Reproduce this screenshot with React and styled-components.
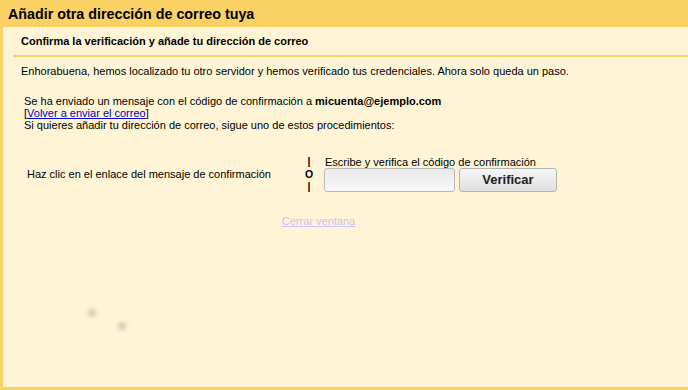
import styled, { createGlobalStyle } from "styled-components";

const GlobalStyle = createGlobalStyle`
  html, body {
    margin: 0;
    padding: 0;
    background: #fff5d6;
  }
  body {
    font-family: "Liberation Sans", Arial, sans-serif;
    color: #000;
  }
`;

const Frame = styled.div`
  position: relative;
  box-sizing: border-box;
  width: 688px;
  height: 390px;
  background: #fff5d6;
  border-left: 3px solid #f9d165;
  border-bottom: 3px solid #f9d165;
  overflow: hidden;
`;

const TitleBar = styled.h1`
  margin: 0 0 0 -3px;
  height: 27px;
  line-height: 28px;
  padding-left: 8px;
  background: #f9d165;
  font-size: 14.3px;
  font-weight: bold;
`;

const Panel = styled.div`
  padding-left: 10px;
`;

const SubHeader = styled.h2`
  margin: 0;
  height: 28px;
  line-height: 28px;
  padding-left: 8px;
  font-size: 11px;
  font-weight: bold;
  border-bottom: 2px solid #f9d165;
`;

const Body = styled.div`
  padding: 8px 0 0 8px;
  font-size: 11px;
  line-height: 12px;
`;

const Intro = styled.p`
  margin: 0;
  line-height: 13px;
`;

const Notice = styled.div`
  margin: 17px 0 0 3px;
`;

const Line = styled.div``;

const ResendLink = styled.a`
  color: #0000cc;
  text-decoration: underline;
`;

const Methods = styled.div`
  display: flex;
  align-items: center;
  margin-top: 24px;
`;

const MethodText = styled.div`
  width: 278px;
  padding-left: 6px;
  box-sizing: border-box;
`;

const Divider = styled.div`
  display: flex;
  flex-direction: column;
  align-items: center;
  width: 20px;
  font-weight: bold;
  font-size: 10.5px;
  line-height: 12.5px;
  color: #000;
`;

const CodeBox = styled.div`
  padding-left: 5px;
`;

const CodeLabel = styled.div`
  font-size: 11px;
  line-height: 12px;
  padding-left: 1px;
`;

const CodeRow = styled.div`
  display: flex;
  gap: 4px;
`;

const CodeInput = styled.input`
  box-sizing: border-box;
  width: 131px;
  height: 24px;
  border: 1px solid #b8b8b8;
  border-radius: 3px;
  background: linear-gradient(#e9e9e9, #f8f8f8);
  padding: 2px 4px;
  font-family: inherit;
`;

const VerifyButton = styled.button`
  box-sizing: border-box;
  width: 98px;
  height: 24px;
  border: 1px solid #b4b4b4;
  border-radius: 3px;
  background: linear-gradient(#f6f6f6, #dedede);
  font-family: "Liberation Sans", Arial, sans-serif;
  font-size: 13px;
  font-weight: bold;
  color: #222;
`;

const Footer = styled.div`
  text-align: center;
  margin: 22px 0 0 -72px;
`;

const CloseLink = styled.a`
  color: #c9c2f2;
  text-decoration: underline;
  font-size: 11px;
`;

const Smudge = styled.span`
  position: absolute;
  left: ${(p) => p.x}px;
  top: ${(p) => p.y}px;
  width: 8px;
  height: 8px;
  border-radius: 50%;
  background: #d2cbb0;
  filter: blur(2px);
`;

export default function App() {
  return (
    <>
      <GlobalStyle />
      <Frame>
        <TitleBar>Añadir otra dirección de correo tuya</TitleBar>
        <Panel>
          <SubHeader>Confirma la verificación y añade tu dirección de correo</SubHeader>
          <Body>
            <Intro>
              Enhorabuena, hemos localizado tu otro servidor y hemos verificado tus
              credenciales. Ahora solo queda un paso.
            </Intro>
            <Notice>
              <Line>
                Se ha enviado un mensaje con el código de confirmación a{" "}
                <b>micuenta@ejemplo.com</b>
              </Line>
              <Line>
                [<ResendLink href="#">Volver a enviar el correo</ResendLink>]
              </Line>
              <Line>
                Si quieres añadir tu dirección de correo, sigue uno de estos
                procedimientos:
              </Line>
            </Notice>
            <Methods>
              <MethodText>Haz clic en el enlace del mensaje de confirmación</MethodText>
              <Divider>
                <span>|</span>
                <span>O</span>
                <span>|</span>
              </Divider>
              <CodeBox>
                <CodeLabel>Escribe y verifica el código de confirmación</CodeLabel>
                <CodeRow>
                  <CodeInput type="text" />
                  <VerifyButton>Verificar</VerifyButton>
                </CodeRow>
              </CodeBox>
            </Methods>
            <Footer>
              <CloseLink href="#">Cerrar ventana</CloseLink>
            </Footer>
          </Body>
        </Panel>
        <Smudge x={85} y={309} />
        <Smudge x={115} y={322} />
      </Frame>
    </>
  );
}
